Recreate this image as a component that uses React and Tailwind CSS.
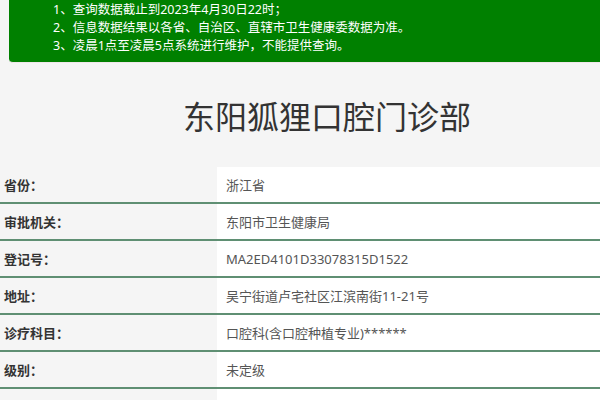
const notices = [
  "1、查询数据截止到2023年4月30日22时；",
  "2、信息数据结果以各省、自治区、直辖市卫生健康委数据为准。",
  "3、凌晨1点至凌晨5点系统进行维护，不能提供查询。",
];

const rows = [
  { label: "省份：", value: "浙江省" },
  { label: "审批机关：", value: "东阳市卫生健康局" },
  { label: "登记号：", value: "MA2ED4101D33078315D1522" },
  { label: "地址：", value: "吴宁街道卢宅社区江滨南街11-21号" },
  { label: "诊疗科目：", value: "口腔科(含口腔种植专业)******" },
  { label: "级别：", value: "未定级" },
  { label: "类别：", value: "门诊部" },
];

const App = () => {
  return (
    <div
      className="w-[600px] h-[400px] overflow-hidden bg-[#f5f5f5]"
      style={{ fontFamily: '"Noto Sans", "Noto Sans CJK SC", sans-serif' }}
    >
      <div className="ml-[9px] bg-[#008000] rounded-bl-[4px] pl-[44px] pt-px pb-[7px] text-white text-[12.5px] leading-[18px] border-b border-[#f0e6ea]">
        {notices.map((n, i) => (
          <div key={i}>{n}</div>
        ))}
      </div>

      <div className="h-[100px] pt-[8px] flex items-center justify-center pl-[54px]">
        <h1 className="text-[32px] text-[#333] font-normal leading-none">
          东阳狐狸口腔门诊部
        </h1>
      </div>

      <div className="mt-[4px]">
        {rows.map((row, i) => (
          <div
            key={i}
            className="grid grid-cols-[217px_1fr] h-[37px] border-b-2 border-[#5f8f73]"
          >
            <div className="flex items-center pl-[4px] pt-[3px] text-[13px] font-bold text-[#333]">
              {row.label}
            </div>
            <div className="flex items-center bg-white pl-[9px] pt-[3px] text-[13px] text-[#555]">
              {row.value}
            </div>
          </div>
        ))}
      </div>
    </div>
  );
};

export default App;
